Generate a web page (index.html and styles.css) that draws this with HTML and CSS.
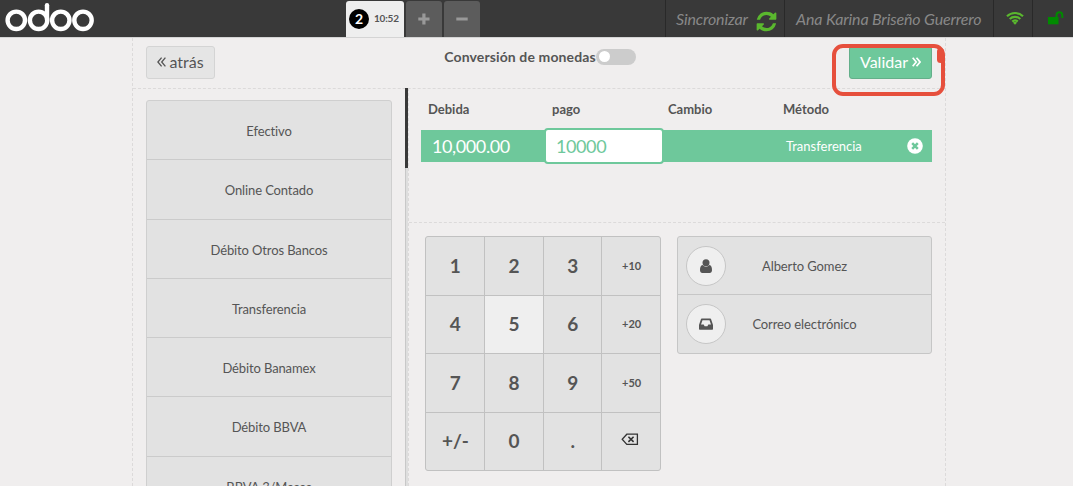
FILE: index.html
```html
<!DOCTYPE html>
<html lang="es">
<head>
    <meta charset="UTF-8">
    <meta name="viewport" content="width=device-width, initial-scale=1.0">
    <title>Punto de venta</title>
    <link rel="stylesheet" href="styles.css">
</head>
<body>
    <!-- Barra superior -->
    <header class="topbar">
        <svg class="logo" width="90" height="30" viewBox="0 0 90 30" fill="none" stroke="#fff" stroke-width="4.4">
            <circle cx="11.3" cy="18.3" r="8.7"/>
            <circle cx="33.6" cy="18.3" r="8.7"/>
            <circle cx="55.8" cy="18.3" r="8.7"/>
            <circle cx="78" cy="18.3" r="8.7"/>
            <path d="M42 3.2V18" stroke-linecap="round"/>
        </svg>
        <div class="orders">
            <div class="order selected"><span class="order-num">2</span><span class="order-time">10:52</span></div>
            <div class="order square"><svg width="12" height="12" viewBox="0 0 12 12"><path d="M4.3.5h3.2v4h4v3h-4v4H4.3v-4h-4v-3h4z" fill="#999"/></svg></div>
            <div class="order square"><svg width="12" height="12" viewBox="0 0 12 12"><path d="M.3 4.5h11.4v3H.3z" fill="#999"/></svg></div>
        </div>
        <div class="status">
            <div class="status-item sync">Sincronizar
                <svg width="23" height="23" viewBox="0 0 1792 1792"><path fill="#5ab82e" d="M1639 1056q0 5-1 7-64 268-268 434.5t-478 166.5q-146 0-282.5-55t-243.5-157l-129 129q-19 19-45 19t-45-19-19-45v-448q0-26 19-45t45-19h448q26 0 45 19t19 45-19 45l-137 137q71 66 161 102t187 36q134 0 250-65t186-179q11-17 53-117 8-23 30-23h192q13 0 22.5 9.5t9.5 22.5zm25-800v448q0 26-19 45t-45 19h-448q-26 0-45-19t-19-45 19-45l138-138q-148-137-349-137-134 0-250 65t-186 179q-11 17-53 117-8 23-30 23h-199q-13 0-22.5-9.5t-9.5-22.5v-7q65-268 270-434.5t480-166.5q146 0 284 55.5t245 156.5l130-129q19-19 45-19t45 19 19 45z"/></svg>
            </div>
            <div class="status-item user">Ana Karina Briseño Guerrero</div>
            <div class="status-item wifi">
                <svg width="18" height="14" viewBox="0 0 18 14" fill="none" stroke="#5ab82e" stroke-width="2.2"><path d="M1 5.2a11.6 11.6 0 0 1 16 0M3.7 8a7.7 7.7 0 0 1 10.6 0M6.300 10.600a4 4 0 0 1 5.400 0"/><path d="M9 13.800l-2-2a2.800 2.800 0 0 1 4 0z" fill="#5ab82e" stroke="none"/></svg>
            </div>
            <div class="status-item lock">
                <svg width="16" height="14" viewBox="0 0 16 14"><path d="M0 6h10.500v7.300H0z" fill="#008a00"/><path d="M8.500 6.500V4.200a2.900 2.900 0 0 1 5.800 0V7" fill="none" stroke="#008a00" stroke-width="2"/></svg>
            </div>
        </div>
    </header>

    <!-- Pantalla de pago -->
    <main class="screen">
        <div class="screen-head">
            <button class="button back">
                <svg width="9" height="10" viewBox="0 0 9 10" fill="none" stroke="#555" stroke-width="1.3"><path d="M4.6.6L.9 5l3.7 4.4M8.4.6L4.7 5l3.7 4.4"/></svg>
                atrás
            </button>
            <div class="currency">Conversión de monedas<span class="switch"></span></div>
            <div class="next-wrap">
                <button class="button next">Validar
                    <svg width="9" height="10" viewBox="0 0 9 10" fill="none" stroke="#fff" stroke-width="1.7"><path d="M.7.8L4.2 5 .7 9.2M4.5.8L8 5 4.5 9.2"/></svg>
                </button>
                <span class="mark"></span>
            </div>
        </div>
        <div class="screen-body">
            <div class="left">
                <div class="methods">
                    <div class="method">Efectivo</div>
                    <div class="method">Online Contado</div>
                    <div class="method">Débito Otros Bancos</div>
                    <div class="method">Transferencia</div>
                    <div class="method">Débito Banamex</div>
                    <div class="method">Débito BBVA</div>
                    <div class="method">BBVA 3/Meses</div>
                </div>
                <div class="scroll"><div class="thumb"></div></div>
            </div>
            <div class="right">
                <div class="lines">
                    <div class="line line-head">
                        <span>Debida</span><span>pago</span><span>Cambio</span><span>Método</span><span></span>
                    </div>
                    <div class="line line-selected">
                        <span class="due">10,000.00</span>
                        <span class="paid">10000</span>
                        <span></span>
                        <span class="name">Transferencia</span>
                        <span class="delete">
                            <svg width="16" height="16" viewBox="0 0 16 16"><circle cx="8" cy="8" r="7.8" fill="#fff"/><path d="M5.2 5.2l5.6 5.6M10.8 5.2l-5.6 5.6" stroke="#6ec89b" stroke-width="2.5"/></svg>
                        </span>
                    </div>
                </div>
                <div class="bottom">
                    <div class="numpad">
                        <div class="key">1</div><div class="key">2</div><div class="key">3</div><div class="key small">+10</div>
                        <div class="key">4</div><div class="key hover">5</div><div class="key">6</div><div class="key small">+20</div>
                        <div class="key">7</div><div class="key">8</div><div class="key">9</div><div class="key small">+50</div>
                        <div class="key">+/-</div><div class="key">0</div><div class="key">.</div>
                        <div class="key erase"><svg width="18" height="13" viewBox="0 0 18 13" fill="none" stroke="#333" stroke-width="1.3"><path d="M5.8 1.2h10.6v10.2H5.8L1.2 6.3z"/><path d="M7.4 3.7l5.2 5.2M12.6 3.7L7.4 8.9" stroke-width="1.6"/></svg></div>
                    </div>
                    <div class="options">
                        <div class="option">
                            <span class="option-icon"><svg width="14" height="14" viewBox="0 0 14 14" fill="#555"><circle cx="7" cy="3.8" r="3.5"/><path d="M3.6 6.1C1.6 6.5 1 8.7 1 11.2 1 12.8 2 14 3.3 14h7.4C12 14 13 12.8 13 11.2c0-2.500-.6-4.700-2.600-5.100A4.600 4.600 0 0 1 7 7.700 4.600 4.600 0 0 1 3.600 6.100z"/></svg></span>
                            <span class="option-text">Alberto Gomez</span>
                        </div>
                        <div class="option">
                            <span class="option-icon"><svg width="14" height="12" viewBox="0 0 14 12" fill="#555" fill-rule="evenodd"><path d="M2.7.4h8.600q.5 0 .7.500L13.700 6q.3.700.3 1.300v3.800q0 .7-.7.700H.7q-.7 0-.7-.7V7.300Q0 6.700.3 6L2 .9q.2-.5.7-.5zM3.500 2.200L2 6.400h2.700l.9 1.900h2.800l.9-1.900H12l-1.500-4.200z"/></svg></span>
                            <span class="option-text">Correo electrónico</span>
                        </div>
                    </div>
                </div>
            </div>
        </div>
    </main>
</body>
</html>
```

FILE: styles.css
```css
* {
    box-sizing: border-box;
}

body {
    margin: 0;
    height: 486px;
    overflow: hidden;
    display: flex;
    flex-direction: column;
    background: #f0eeee;
    color: #555;
    font-family: Lato, sans-serif;
    font-size: 13px;
}

svg {
    display: block;
    flex: none;
}

/* Barra superior */
.topbar {
    display: flex;
    flex: none;
    height: 38px;
    background: #393939;
    border-bottom: 1px solid #d4d4d4;
}

.logo {
    margin: 2px 0 0 5px;
}

.orders {
    display: flex;
    align-items: flex-end;
    gap: 2px;
    margin-left: 251px;
}

.order {
    display: flex;
    align-items: center;
    height: 36px;
    border-radius: 3px 3px 0 0;
    background: #5c5c5c;
}

.order.selected {
    width: 58px;
    padding-left: 3px;
    gap: 5px;
    background: #eee;
    font-weight: bold;
}

.order.square {
    width: 36px;
    justify-content: center;
}

.order-num {
    width: 20px;
    height: 20px;
    border-radius: 50%;
    background: #000;
    color: #fff;
    font-size: 14px;
    line-height: 20px;
    text-align: center;
}

.order-time {
    font-size: 10px;
    letter-spacing: -0.2px;
    margin-top: -2px;
}

.status {
    display: flex;
    margin-left: auto;
    color: #888;
    font-size: 16px;
    font-style: italic;
    letter-spacing: -0.15px;
}

.status-item {
    display: flex;
    align-items: center;
    border-left: 1px solid #292929;
}

.sync {
    width: 119px;
    padding-left: 10px;
    gap: 7px;
}

.sync svg {
    margin-top: 5px;
}

.user {
    width: 209px;
    padding-left: 11px;
}

.wifi {
    width: 39px;
    padding-left: 12px;
}

.lock {
    width: 41px;
    padding-left: 15px;
}

.wifi svg,
.lock svg {
    margin-top: -2px;
}

/* Pantalla de pago */
.screen {
    display: flex;
    flex: 1;
    flex-direction: column;
    width: 814px;
    min-height: 0;
    margin-left: 132px;
    border: 1px dashed #dcdada;
    border-width: 0 1px;
}

.screen-head {
    display: flex;
    flex: none;
    justify-content: space-between;
    height: 51px;
    padding: 8px 13px 0;
    border-bottom: 1px dashed #dcdada;
}

.button {
    display: flex;
    align-items: center;
    justify-content: center;
    height: 33px;
    padding: 0 0 2px;
    border: 1px solid #d4d4d4;
    border-radius: 3px;
    background: #e5e5e5;
    color: #555;
    font-family: inherit;
    font-size: 16px;
}

.back {
    width: 69px;
    gap: 3px;
}

.next {
    width: 83px;
    gap: 4px;
    border-color: #64af8a;
    background: #6ec89b;
    color: #fff;
}

.currency {
    display: flex;
    margin: 2px 0 0 16px;
    font-size: 14px;
    font-weight: bold;
    line-height: 18px;
    letter-spacing: 0.12px;
}

.switch {
    width: 40px;
    height: 16px;
    margin-top: 1px;
    padding: 2px 3px;
    border-radius: 8px;
    background: #ccc;
}

.switch::before {
    content: "";
    display: block;
    width: 11px;
    height: 11px;
    border-radius: 50%;
    background: #fff;
}

.next-wrap {
    position: relative;
}

/* Recuadro rojo sobre el botón de validar */
.mark {
    position: absolute;
    left: -17px;
    top: -2px;
    width: 113px;
    height: 52px;
    border: 4px solid #e64f3c;
    border-radius: 11px;
}

.mark::after {
    content: "";
    position: absolute;
    right: -3px;
    top: 0;
    width: 7px;
    height: 15px;
    border-radius: 4px;
    background: #e64f3c;
}

.screen-body {
    display: flex;
    flex: 1;
    min-height: 0;
    margin-top: -1px;
}

.left {
    display: flex;
    justify-content: space-between;
    width: 275px;
    padding-left: 13px;
    overflow: hidden;
}

.methods {
    width: 246px;
    height: 420px;
    margin-top: 12px;
    border: 1px solid #cfcfcf;
    border-radius: 3px;
    background: #e2e2e2;
    letter-spacing: -0.12px;
}

.method {
    height: 59.3px;
    border-bottom: 1px solid #cbcbcb;
    line-height: 60px;
    text-align: center;
}

.scroll {
    width: 3px;
    background: #dedede;
    border-left: 1px solid #c8c8c8;
}

.thumb {
    width: 3px;
    height: 80px;
    margin-left: -1px;
    background: #393939;
}

.right {
    flex: 1;
    border-left: 1px dashed #dcdada;
}

.lines {
    height: 135px;
    padding: 0 12px;
    border-bottom: 1px dashed #dcdada;
}

.line {
    display: grid;
    grid-template-columns: 123px 120px 113px 122px 33px;
    width: 511px;
    align-items: center;
}

.line-head {
    height: 42px;
    font-weight: bold;
}

.line-head span {
    padding-left: 7px;
}

.line-head span:nth-child(2) {
    padding-left: 8px;
}

.line-head span:nth-child(3) {
    padding-left: 4px;
}

.line-head span:nth-child(4) {
    padding-left: 6px;
}

.line-selected {
    height: 32px;
    background: #6ec89b;
    color: #fff;
}

.due {
    padding-left: 11px;
    font-size: 18px;
    letter-spacing: -0.4px;
}

.paid {
    height: 36px;
    margin: -2px 0;
    padding-left: 10px;
    border: 2px solid #6ec89b;
    border-radius: 4px;
    background: #fff;
    color: #6ec89b;
    font-size: 18px;
    line-height: 33px;
    letter-spacing: -0.4px;
}

.name {
    padding-left: 9px;
}

.delete {
    padding-left: 8px;
}

.bottom {
    display: flex;
    gap: 16px;
    padding: 13px 0 0 16px;
}

.numpad {
    display: grid;
    grid-template-columns: repeat(4, 1fr);
    grid-auto-rows: 1fr;
    gap: 1px;
    width: 236px;
    height: 235px;
    border: 1px solid #c1c1c1;
    border-radius: 3px;
    background: #c1c1c1;
    overflow: hidden;
}

.key {
    display: flex;
    align-items: center;
    justify-content: center;
    padding: 0 0 1px 1px;
    background: #e2e2e2;
    font-size: 19px;
    font-weight: bold;
}

.key.small {
    font-size: 11px;
}

.key.erase {
    padding: 0 2px 3px 0;
}

.key.hover {
    background: #efefef;
}

.options {
    width: 255px;
    height: 118px;
    border: 1px solid #c6c6c6;
    border-radius: 3px;
    background: #e2e2e2;
    letter-spacing: -0.1px;
}

.option {
    display: flex;
    align-items: center;
    height: 57px;
    padding-left: 8px;
}

.option + .option {
    height: 59px;
    border-top: 1px solid #c6c6c6;
}

.option-icon {
    display: flex;
    align-items: center;
    justify-content: center;
    width: 40px;
    height: 40px;
    border: 1px solid #c6c6c6;
    border-radius: 50%;
    background: #efefef;
}

.option-text {
    width: 157px;
    text-align: center;
}
```
